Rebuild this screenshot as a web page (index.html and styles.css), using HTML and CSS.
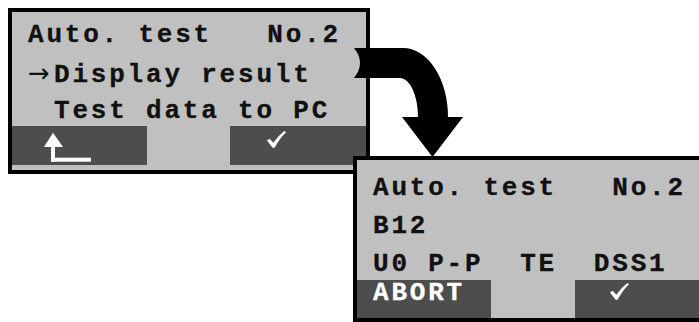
FILE: index.html
```html
<!DOCTYPE html>
<html lang="en">
<head>
  <meta charset="UTF-8">
  <title>Auto. test — display result</title>
  <link rel="stylesheet" href="styles.css">
</head>
<body>
  <div class="stage">
    <div class="screen">
      <div class="lines">
        <div class="line">Auto. test   No.2</div>
        <div class="line"><span class="pointer">&rarr;</span>Display result</div>
        <div class="line indent">Test data to PC</div>
      </div>
      <div class="keys">
        <div class="key key-left">
          <svg class="icon-back" width="48" height="30" viewBox="0 0 48 30">
            <path d="M9 0.7 L19 15 L0 15 Z" fill="#fff"/>
            <rect x="7" y="14" width="4" height="15.7" fill="#fff"/>
            <rect x="7" y="25.7" width="40" height="4" fill="#fff"/>
          </svg>
        </div>
        <div class="key key-right">
          <svg class="icon-ok" width="19" height="17" viewBox="0 0 19 17">
            <path d="M0 9.4 L2.7 7.7 L6.3 11.8 Q11 5 17.3 0 L19 1.3 Q12.6 7.4 7.6 16.8 L5.6 16.8 Z" fill="#fff"/>
          </svg>
        </div>
      </div>
    </div>

    <div class="screen screen-result">
      <div class="lines">
        <div class="line">Auto. test   No.2</div>
        <div class="line">B12</div>
        <div class="line">U0 P-P  TE  DSS1</div>
      </div>
      <div class="keys">
        <div class="key key-left key-label">ABORT</div>
        <div class="key key-right">
          <svg class="icon-ok" width="19" height="17" viewBox="0 0 19 17">
            <path d="M0 9.4 L2.7 7.7 L6.3 11.8 Q11 5 17.3 0 L19 1.3 Q12.6 7.4 7.6 16.8 L5.6 16.8 Z" fill="#fff"/>
          </svg>
        </div>
      </div>
    </div>

    <svg class="flow-arrow" width="699" height="322" viewBox="0 0 699 322">
      <path d="M354 48 L403 48 A45 69 0 0 1 448 117 L463 117 L432.5 157 L402 117 L418 117 A18 39 0 0 0 400 78 L354 78 Q366 63 354 48 Z" fill="#000"/>
    </svg>
  </div>
</body>
</html>
```

FILE: styles.css
```css
body {
  margin: 0;
  background: #fff;
  overflow: hidden;
}
.stage {
  position: relative;
  width: 699px;
  height: 322px;
  overflow: hidden;
}
.screen {
  box-sizing: border-box;
  width: 362px;
  height: 166px;
  margin: 8px 0 0 8px;
  border: 4px solid #000;
  background: #c0c0c0;
  display: flex;
  flex-direction: column;
  font-family: "Liberation Mono", "Courier New", monospace;
  font-weight: bold;
  font-size: 26px;
  letter-spacing: 2.8px;
  color: #111;
  -webkit-text-stroke: 0.3px #111;
}
.screen-result {
  position: relative;
  margin: -18px 0 0 353px;
}
.lines {
  box-sizing: border-box;
  height: 114px;
  padding: 3.5px 0 0 16px;
}
.screen-result .lines {
  height: 120px;
  padding-top: 9px;
}
.line {
  height: 38px;
  line-height: 38px;
  white-space: pre;
}
.pointer {
  display: inline-block;
  width: 26px;
  font-family: "DejaVu Sans", sans-serif;
  font-weight: normal;
  letter-spacing: 0;
  -webkit-text-stroke: 0;
}
.indent {
  padding-left: 26px;
}
.keys {
  display: flex;
  justify-content: space-between;
  height: 39px;
}
.screen-result .keys {
  height: 38px;
}
.key {
  box-sizing: border-box;
  background: #4d4d4d;
  display: flex;
  align-items: flex-start;
}
.key-left {
  width: 135px;
}
.key-right {
  width: 136px;
  padding: 5px 0 0 37px;
}
.screen-result .key-left {
  width: 134px;
}
.screen-result .key-right {
  padding: 3px 0 0 35px;
}
.icon-back {
  margin: 6px 0 0 32px;
}
.key-label {
  padding-left: 16px;
  color: #fff;
  -webkit-text-stroke: 0.3px #fff;
  line-height: 26px;
  padding-top: 0;
}
.flow-arrow {
  position: absolute;
  left: 0;
  top: 0;
  z-index: 2;
}
```
